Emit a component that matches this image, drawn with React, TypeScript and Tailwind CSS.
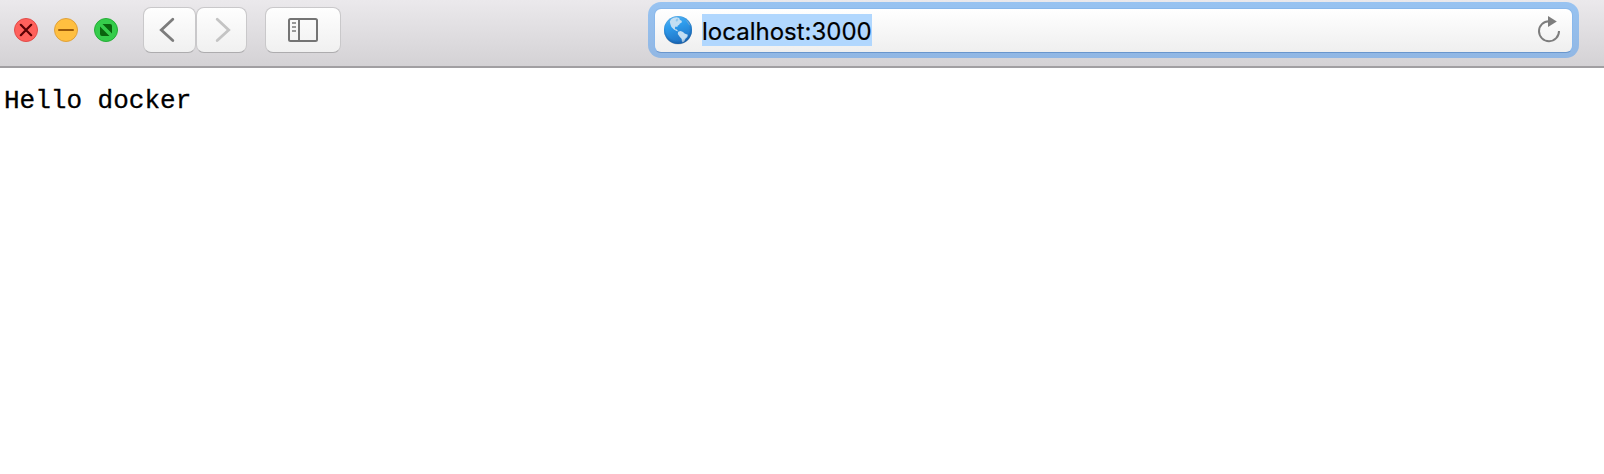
import type { ReactNode } from "react";

function ToolbarButton({ label, className, children }: { label: string; className: string; children: ReactNode }) {
  return (
    <button
      aria-label={label}
      className={`flex h-[46px] shrink-0 items-center justify-center rounded-[8px] border border-[#c9c8ca] border-b-[#adacae] bg-linear-to-b from-[#fefefe] to-[#f0f0f0] ${className}`}
    >
      {children}
    </button>
  );
}

function WindowControls() {
  return (
    <div className="flex gap-4">
      <svg width="24" height="24" viewBox="0 0 24 24">
        <circle cx="12" cy="12" r="11.5" fill="#ff615c" stroke="#e14b48" />
        <path d="M6.8 6.8 17.2 17.2M17.2 6.8 6.8 17.2" stroke="#5a0204" strokeWidth="2.2" strokeLinecap="round" />
      </svg>
      <svg width="24" height="24" viewBox="0 0 24 24">
        <circle cx="12" cy="12" r="11.5" fill="#ffbf40" stroke="#dfa03a" />
        <path d="M5 12H19" stroke="#9a590a" strokeWidth="2" strokeLinecap="round" />
      </svg>
      <svg width="24" height="24" viewBox="0 0 24 24">
        <circle cx="12" cy="12" r="11.5" fill="#35cc4b" stroke="#25ad36" />
        <path d="M8.5 6H16Q18 6 18 8V15.5ZM6 8.5 15.5 18H8Q6 18 6 16Z" fill="#0a640e" />
      </svg>
    </div>
  );
}

function Globe() {
  return (
    <svg className="mt-[6px] shrink-0" width="30" height="30" viewBox="0 0 30 30">
      <defs>
        <linearGradient id="ocean" x1="0" y1="0" x2="0.3" y2="1">
          <stop offset="0" stopColor="#62b4ec" />
          <stop offset="0.4" stopColor="#2f9eee" />
          <stop offset="1" stopColor="#1f74c6" />
        </linearGradient>
        <radialGradient id="rim" cx="0.48" cy="0.45" r="0.58">
          <stop offset="0.72" stopColor="#0a4386" stopOpacity="0" />
          <stop offset="1" stopColor="#083d7b" stopOpacity="0.5" />
        </radialGradient>
      </defs>
      <ellipse cx="15" cy="16" rx="13.9" ry="13.5" fill="#000" opacity="0.18" />
      <circle cx="15" cy="15" r="14" fill="url(#ocean)" />
      <path
        d="M8 4.3 10.5 2.8 13.6 2.2 16.2 3 16.8 4.8 18.9 6 18.5 7.7 16.9 8.6 16 10 14.8 10.6 14.3 12 12.6 11.6 11.8 12.9 12.3 14.3 13.9 14.6 15 16.2 13.6 16 10.9 14.5 8.4 12 7.3 9 6.8 6.5ZM15.1 16.8 17.6 16 20 17 21.6 18.6 24.8 19.7 24.4 22.1 22.5 23.8 21.4 26.2 19.8 27.4 18.9 26.5 18.7 24 16.7 21.7 14.8 19Z"
        fill="#c3def2"
      />
      <path d="M22.5 4.4 24.8 6 27.2 9.4 27.4 11 25.5 9.3 24.3 7.2Z" fill="#6fa9da" />
      <path d="M13 4.2 14.7 3.5 15.3 5 14 6.7 12.7 6Z" fill="#8fc8ef" />
      <circle cx="15" cy="15" r="14" fill="url(#rim)" />
    </svg>
  );
}

export default function App() {
  return (
    <div className="h-[474px] w-full overflow-hidden bg-white">
      <header className="flex h-[68px] items-start border-b-2 border-[#a19fa2] bg-linear-to-b from-[#ebe9ec] to-[#d4d2d5]">
        <div className="ml-[14px] pt-[18px]">
          <WindowControls />
        </div>
        <nav className="ml-[25px] flex pt-[7px]">
          <ToolbarButton label="Back" className="w-[53px] pr-[6px]">
            <svg width="16" height="26" viewBox="0 0 16 26" fill="none" stroke="#7c7c7c" strokeWidth="2.8" strokeLinecap="round">
              <path d="M13.8 2.2 2.3 12.9 13.8 23.6" />
            </svg>
          </ToolbarButton>
          <ToolbarButton label="Forward" className="w-[51px]">
            <svg className="ml-[3px]" width="16" height="26" viewBox="0 0 16 26" fill="none" stroke="#c4c4c4" strokeWidth="2.8" strokeLinecap="round">
              <path d="M2.2 2.2 13.7 12.9 2.2 23.6" />
            </svg>
          </ToolbarButton>
          <ToolbarButton label="Show sidebar" className="ml-[18px] w-[76px]">
            <svg width="30" height="24" viewBox="0 0 30 24" fill="none" stroke="#747474" strokeWidth="2">
              <rect x="1" y="1" width="28" height="22" rx="1.5" />
              <path d="M11 1V23" />
              <path d="M4 5H8M4 9H8M4 13H8" stroke="#999" />
            </svg>
          </ToolbarButton>
        </nav>
        <div className="mt-[2px] mr-[25px] ml-auto h-14 w-[931px] rounded-[13px] bg-linear-to-b from-[#98c3f1] to-[#91b7e4] p-[6px]">
          <div className="flex h-[45px] items-start rounded-[7px] border border-[#8ab8eb] border-b-[#6996cd] bg-linear-to-b from-white to-[#efefef] pr-[11px] pl-2">
            <Globe />
            <span className="mt-[5px] ml-[9px] h-8 w-[170px] bg-[#b1d7fe] pt-[2px] font-['Inter',sans-serif] text-[24px] leading-[30px] tracking-[0px] whitespace-nowrap text-black [-webkit-text-stroke:0.2px_black]">
              <span className="block pt-px">localhost:3000</span>
            </span>
            <svg className="mt-[6px] ml-auto" width="24" height="28" viewBox="0 0 24 28">
              <path d="M12 6.2A10 10 0 1 0 22 16" fill="none" stroke="#7d7d7d" strokeWidth="2" />
              <path d="M11 1 19.8 6.4 11 12Z" fill="#7d7d7d" />
            </svg>
          </div>
        </div>
      </header>
      <main className="pt-[18px] pl-1">
        <pre className="font-['Courier','Liberation_Mono',monospace] text-[26px] leading-[30px] text-black [-webkit-text-stroke:0.3px_black]">Hello docker</pre>
      </main>
    </div>
  );
}
